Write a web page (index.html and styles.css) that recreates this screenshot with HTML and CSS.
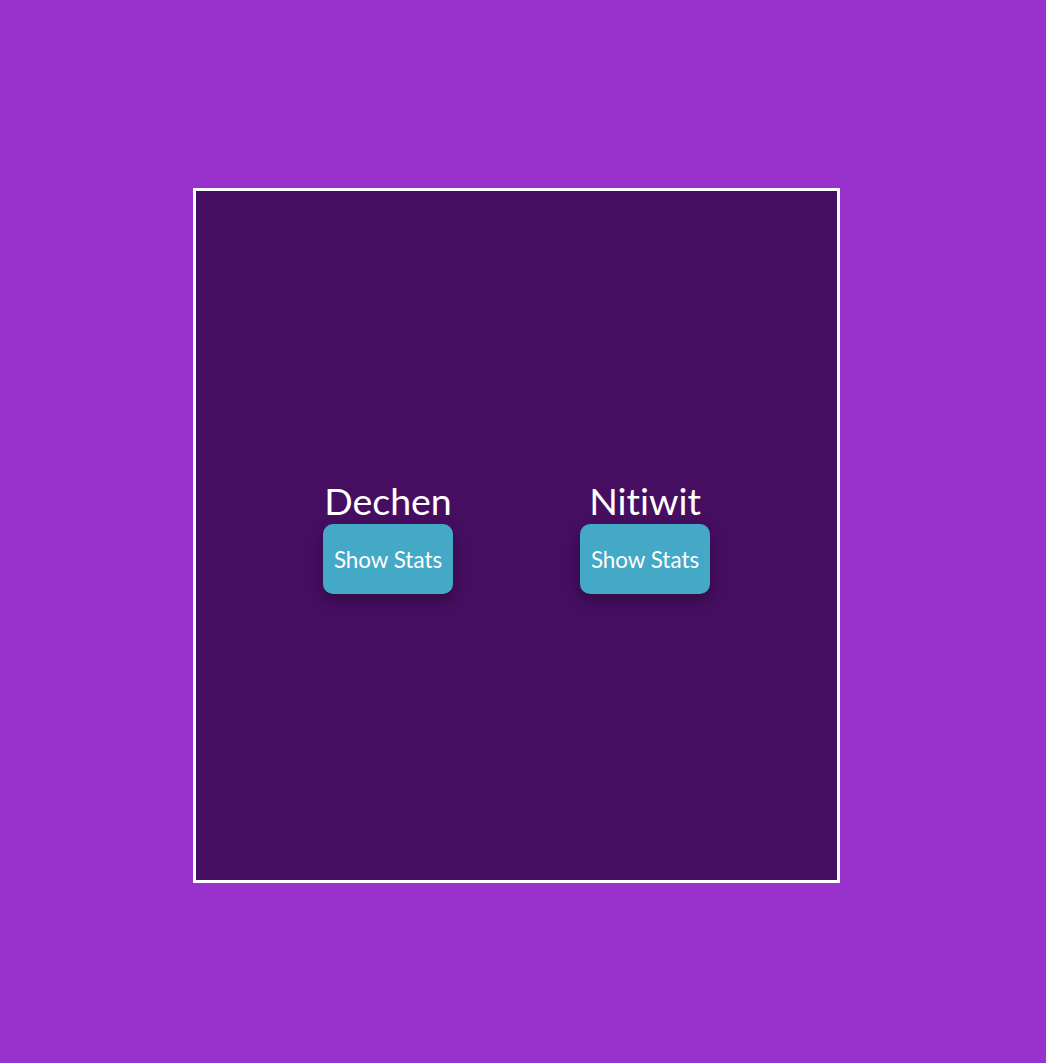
FILE: index.html
```html
<!DOCTYPE html>
<html>
<head>
<meta charset="utf-8">
<link rel="stylesheet" href="styles.css">
</head>
<body>
<div class="arena">
  <div class="fighter">
    <h2 class="name">Dechen</h2>
    <button class="stats-btn">Show Stats</button>
  </div>
  <div class="fighter">
    <h2 class="name">Nitiwit</h2>
    <button class="stats-btn">Show Stats</button>
  </div>
</div>
</body>
</html>
```
FILE: styles.css
```css
html, body {
  margin: 0;
  padding: 0;
}
body {
  background: #9932cc;
  font-family: Lato, "Open Sans", sans-serif;
  font-variant-ligatures: none;
  height: 1063px;
  padding-top: 188px;
  box-sizing: border-box;
}
.arena {
  margin-left: 193px;
  width: 647px;
  height: 695px;
  box-sizing: border-box;
  border: 3px solid #ffffff;
  background: #460e61;
  display: flex;
  justify-content: space-evenly;
  align-items: center;
}
.fighter {
  width: 130px;
  display: flex;
  flex-direction: column;
  align-items: center;
}
.name {
  margin: 0;
  font-size: 37.5px;
  font-weight: 400;
  line-height: 47px;
  color: #ffffff;
  white-space: nowrap;
  font-variant-ligatures: none;
}
.stats-btn {
  width: 130px;
  height: 70px;
  border: none;
  border-radius: 10px;
  background: #44a8c7;
  color: #ffffff;
  font-family: Lato, "Open Sans", sans-serif;
  font-variant-ligatures: none;
  font-size: 22.4px;
  box-shadow: 0 6px 14px rgba(0, 0, 0, 0.32);
  padding: 0;
}
```
